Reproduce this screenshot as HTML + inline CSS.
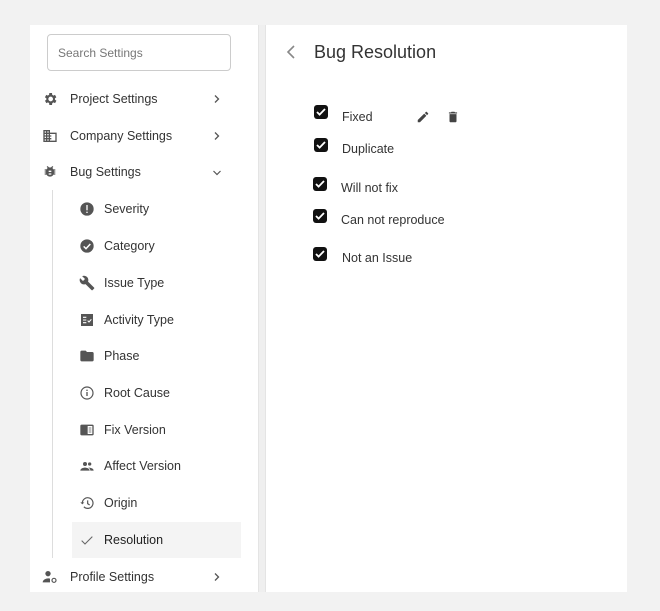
<!DOCTYPE html><html><head><style>
body{margin:0;width:660px;height:611px;background:#f2f2f2;font-family:"Liberation Sans",sans-serif;position:relative;overflow:hidden}
.panel{position:absolute;left:30px;top:25px;width:597px;height:567px;background:#fff}
.sep{position:absolute;left:258px;top:25px;width:8px;height:567px;background:#efefef;border-left:1px solid #e4e4e4;border-right:1px solid #e4e4e4;box-sizing:border-box}
.search{position:absolute;left:47px;top:34px;width:184px;height:37px;border:1px solid #ccc;border-radius:4px;box-sizing:border-box;font-size:12px;color:#777;padding:11px 10px}
.row{position:absolute;font-size:12.5px;color:#333;height:20px;line-height:20px}
.row svg{position:absolute;top:2px}
.ch{position:absolute;left:212px}
.vline{position:absolute;left:52px;top:190px;width:1px;height:368px;background:#ddd}
.hl{position:absolute;left:72px;top:522px;width:169px;height:36px;background:#f4f4f4}
.cb{position:absolute;width:14px;height:14px;background:#111;border-radius:3px}
.cb svg{position:absolute;left:1px;top:1px}
.lbl{position:absolute;font-size:12.5px;color:#333}
</style></head><body>
<div class="panel"></div><div class="sep"></div>
<div class="search">Search Settings</div>
<div class="vline"></div><div class="hl"></div>

<div class="row" style="left:42px;top:89px"><svg width="16" height="16" viewBox="0 0 24 24" style="left:0"><path fill="#555" d="M19.4 13a7.5 7.5 0 0 0 0-2l2.1-1.6-2-3.5-2.5 1a7 7 0 0 0-1.7-1L15 3h-4l-.4 2.9a7 7 0 0 0-1.7 1l-2.5-1-2 3.5L6.6 11a7.5 7.5 0 0 0 0 2l-2.1 1.6 2 3.5 2.5-1a7 7 0 0 0 1.7 1L11 21h4l.4-2.9a7 7 0 0 0 1.7-1l2.5 1 2-3.5zM13 15.5a3.5 3.5 0 1 1 0-7 3.5 3.5 0 0 1 0 7z"/></svg><span style="margin-left:28px">Project Settings</span></div>
<svg class="ch" style="top:94px" width="10" height="10" viewBox="0 0 10 10"><path d="M3 1.5l3.5 3.5L3 8.5" stroke="#555" stroke-width="1.3" fill="none"/></svg>
<div class="row" style="left:42px;top:126px"><svg width="16" height="16" viewBox="0 0 24 24"><path fill="#555" d="M12 7V3H2v18h20V7H12zM6 19H4v-2h2v2zm0-4H4v-2h2v2zm0-4H4V9h2v2zm0-4H4V5h2v2zm4 12H8v-2h2v2zm0-4H8v-2h2v2zm0-4H8V9h2v2zm0-4H8V5h2v2zm10 12h-8v-2h2v-2h-2v-2h2v-2h-2V9h8v10z"/></svg><span style="margin-left:28px">Company Settings</span></div>
<svg class="ch" style="top:131px" width="10" height="10" viewBox="0 0 10 10"><path d="M3 1.5l3.5 3.5L3 8.5" stroke="#555" stroke-width="1.3" fill="none"/></svg>
<div class="row" style="left:42px;top:162px"><svg width="16" height="16" viewBox="0 0 24 24"><path fill="#555" d="M20 8h-2.8a6 6 0 0 0-1.8-2l1.6-1.6L15.6 3l-2.2 2.2a6 6 0 0 0-2.8 0L8.4 3 7 4.4 8.6 6a6 6 0 0 0-1.8 2H4v2h2.1v1H4v2h2.1v1H4v2h2.8a6 6 0 0 0 10.4 0H20v-2h-2.1v-1H20v-2h-2.1v-1H20V8zm-6 8h-4v-2h4v2zm0-4h-4v-2h4v2z"/></svg><span style="margin-left:28px">Bug Settings</span></div>
<svg class="ch" style="top:168px" width="10" height="10" viewBox="0 0 10 10"><path d="M1.5 3l3.5 3.5L8.5 3" stroke="#555" stroke-width="1.2" fill="none"/></svg>

<div class="row" style="left:79px;top:199px"><svg width="16" height="16" viewBox="0 0 24 24"><circle cx="12" cy="12" r="10" fill="#555"/><rect x="11" y="6" width="2" height="8" fill="#fff"/><rect x="11" y="16" width="2" height="2" fill="#fff"/></svg><span style="margin-left:25px">Severity</span></div>
<div class="row" style="left:79px;top:236px"><svg width="16" height="16" viewBox="0 0 24 24"><circle cx="12" cy="12" r="10" fill="#555"/><path d="M7 12.5l3.5 3.5L17 9" stroke="#fff" stroke-width="2.2" fill="none"/></svg><span style="margin-left:25px">Category</span></div>
<div class="row" style="left:79px;top:273px"><svg width="16" height="16" viewBox="0 0 24 24"><path fill="#555" d="M22.7 19l-9.1-9.1c.9-2.3.4-5-1.5-6.9-2-2-5-2.4-7.4-1.3L9 6 6 9 1.6 4.7C.4 7.1.9 10.1 2.9 12.1c1.9 1.9 4.6 2.4 6.9 1.5l9.1 9.1c.4.4 1 .4 1.4 0l2.3-2.3c.5-.4.5-1.1.1-1.4z"/></svg><span style="margin-left:25px">Issue Type</span></div>
<div class="row" style="left:79px;top:310px"><svg width="16" height="16" viewBox="0 0 24 24"><path fill="#555" d="M3 3h18v18H3z"/><path d="M6 8h5M6 12h5M6 16h5" stroke="#fff" stroke-width="1.6"/><path d="M13 13l2 2 3.5-4" stroke="#fff" stroke-width="1.6" fill="none"/></svg><span style="margin-left:25px">Activity Type</span></div>
<div class="row" style="left:79px;top:346px"><svg width="16" height="16" viewBox="0 0 24 24"><path fill="#555" d="M10 4H4c-1.1 0-2 .9-2 2v12c0 1.1.9 2 2 2h16c1.1 0 2-.9 2-2V8c0-1.1-.9-2-2-2h-8l-2-2z"/></svg><span style="margin-left:25px">Phase</span></div>
<div class="row" style="left:79px;top:383px"><svg width="16" height="16" viewBox="0 0 24 24"><circle cx="12" cy="12" r="9" stroke="#555" stroke-width="1.8" fill="none"/><rect x="11" y="10.5" width="2" height="6" fill="#555"/><rect x="11" y="7" width="2" height="2" fill="#555"/></svg><span style="margin-left:25px">Root Cause</span></div>
<div class="row" style="left:79px;top:420px"><svg width="16" height="16" viewBox="0 0 24 24"><rect x="2" y="4" width="20" height="16" rx="2" fill="#555"/><rect x="13" y="6" width="7" height="12" fill="#fff"/><path d="M14.5 9h4M14.5 12h4M14.5 15h4" stroke="#555" stroke-width="1.3"/></svg><span style="margin-left:25px">Fix Version</span></div>
<div class="row" style="left:79px;top:456px"><svg width="16" height="16" viewBox="0 0 24 24"><circle cx="9" cy="9" r="3" fill="#555"/><circle cx="16" cy="9" r="2.5" fill="#555"/><path fill="#555" d="M2 19c0-3 4-4.5 7-4.5s7 1.5 7 4.5zM14 14.5c3 0 8 1 8 4.5h-5c0-2-1-3.5-3-4.5z"/></svg><span style="margin-left:25px">Affect Version</span></div>
<div class="row" style="left:79px;top:493px"><svg width="16" height="16" viewBox="0 0 24 24"><path d="M5 12a8 8 0 1 1 2.3 5.7" stroke="#555" stroke-width="1.8" fill="none"/><path d="M2 11h6l-3 3z" fill="#555"/><path d="M13 8v5l3 2" stroke="#555" stroke-width="1.8" fill="none"/></svg><span style="margin-left:25px">Origin</span></div>
<div class="row" style="left:79px;top:530px"><svg width="16" height="16" viewBox="0 0 24 24"><path d="M4 13l5 5L20 7" stroke="#666" stroke-width="1.6" fill="none"/></svg><span style="margin-left:25px;color:#222">Resolution</span></div>

<div class="row" style="left:42px;top:567px"><svg width="16" height="16" viewBox="0 0 24 24"><circle cx="9" cy="7" r="4" fill="#555"/><path fill="#555" d="M1 20c0-4 5-6 8-6 1 0 2 .1 3 .4V20z"/><circle cx="18" cy="17" r="3" stroke="#555" stroke-width="1.8" fill="none"/></svg><span style="margin-left:28px">Profile Settings</span></div>
<svg class="ch" style="top:572px" width="10" height="10" viewBox="0 0 10 10"><path d="M3 1.5l3.5 3.5L3 8.5" stroke="#555" stroke-width="1.3" fill="none"/></svg>

<svg style="position:absolute;left:285px;top:44px" width="12" height="16" viewBox="0 0 12 16"><path d="M9 2L3 8l6 6" stroke="#888" stroke-width="1.6" fill="none"/></svg>
<div style="position:absolute;left:314px;top:42px;font-size:18px;color:#333">Bug Resolution</div>

<div class="cb" style="left:314px;top:105px"><svg width="12" height="12" viewBox="0 0 12 12"><path d="M2 6l2.6 2.6L10 3" stroke="#fff" stroke-width="1.8" fill="none"/></svg></div>
<div class="lbl" style="left:342px;top:110px">Fixed</div>
<svg style="position:absolute;left:416px;top:110px" width="14" height="14" viewBox="0 0 24 24"><path fill="#444" d="M3 17.2V21h3.8L17.8 9.9l-3.7-3.7zM20.7 7c.4-.4.4-1 0-1.4l-2.3-2.3c-.4-.4-1-.4-1.4 0l-1.8 1.8 3.7 3.7z"/></svg>
<svg style="position:absolute;left:446px;top:109px" width="14" height="16" viewBox="0 0 24 24"><path fill="#444" d="M6 19c0 1.1.9 2 2 2h8c1.1 0 2-.9 2-2V7H6zM19 4h-3.5l-1-1h-5l-1 1H5v2h14z"/></svg>
<div class="cb" style="left:314px;top:138px"><svg width="12" height="12" viewBox="0 0 12 12"><path d="M2 6l2.6 2.6L10 3" stroke="#fff" stroke-width="1.8" fill="none"/></svg></div>
<div class="lbl" style="left:342px;top:142px">Duplicate</div>
<div class="cb" style="left:313px;top:177px"><svg width="12" height="12" viewBox="0 0 12 12"><path d="M2 6l2.6 2.6L10 3" stroke="#fff" stroke-width="1.8" fill="none"/></svg></div>
<div class="lbl" style="left:341px;top:181px">Will not fix</div>
<div class="cb" style="left:313px;top:209px"><svg width="12" height="12" viewBox="0 0 12 12"><path d="M2 6l2.6 2.6L10 3" stroke="#fff" stroke-width="1.8" fill="none"/></svg></div>
<div class="lbl" style="left:341px;top:213px">Can not reproduce</div>
<div class="cb" style="left:313px;top:247px"><svg width="12" height="12" viewBox="0 0 12 12"><path d="M2 6l2.6 2.6L10 3" stroke="#fff" stroke-width="1.8" fill="none"/></svg></div>
<div class="lbl" style="left:342px;top:251px">Not an Issue</div>
</body></html>
